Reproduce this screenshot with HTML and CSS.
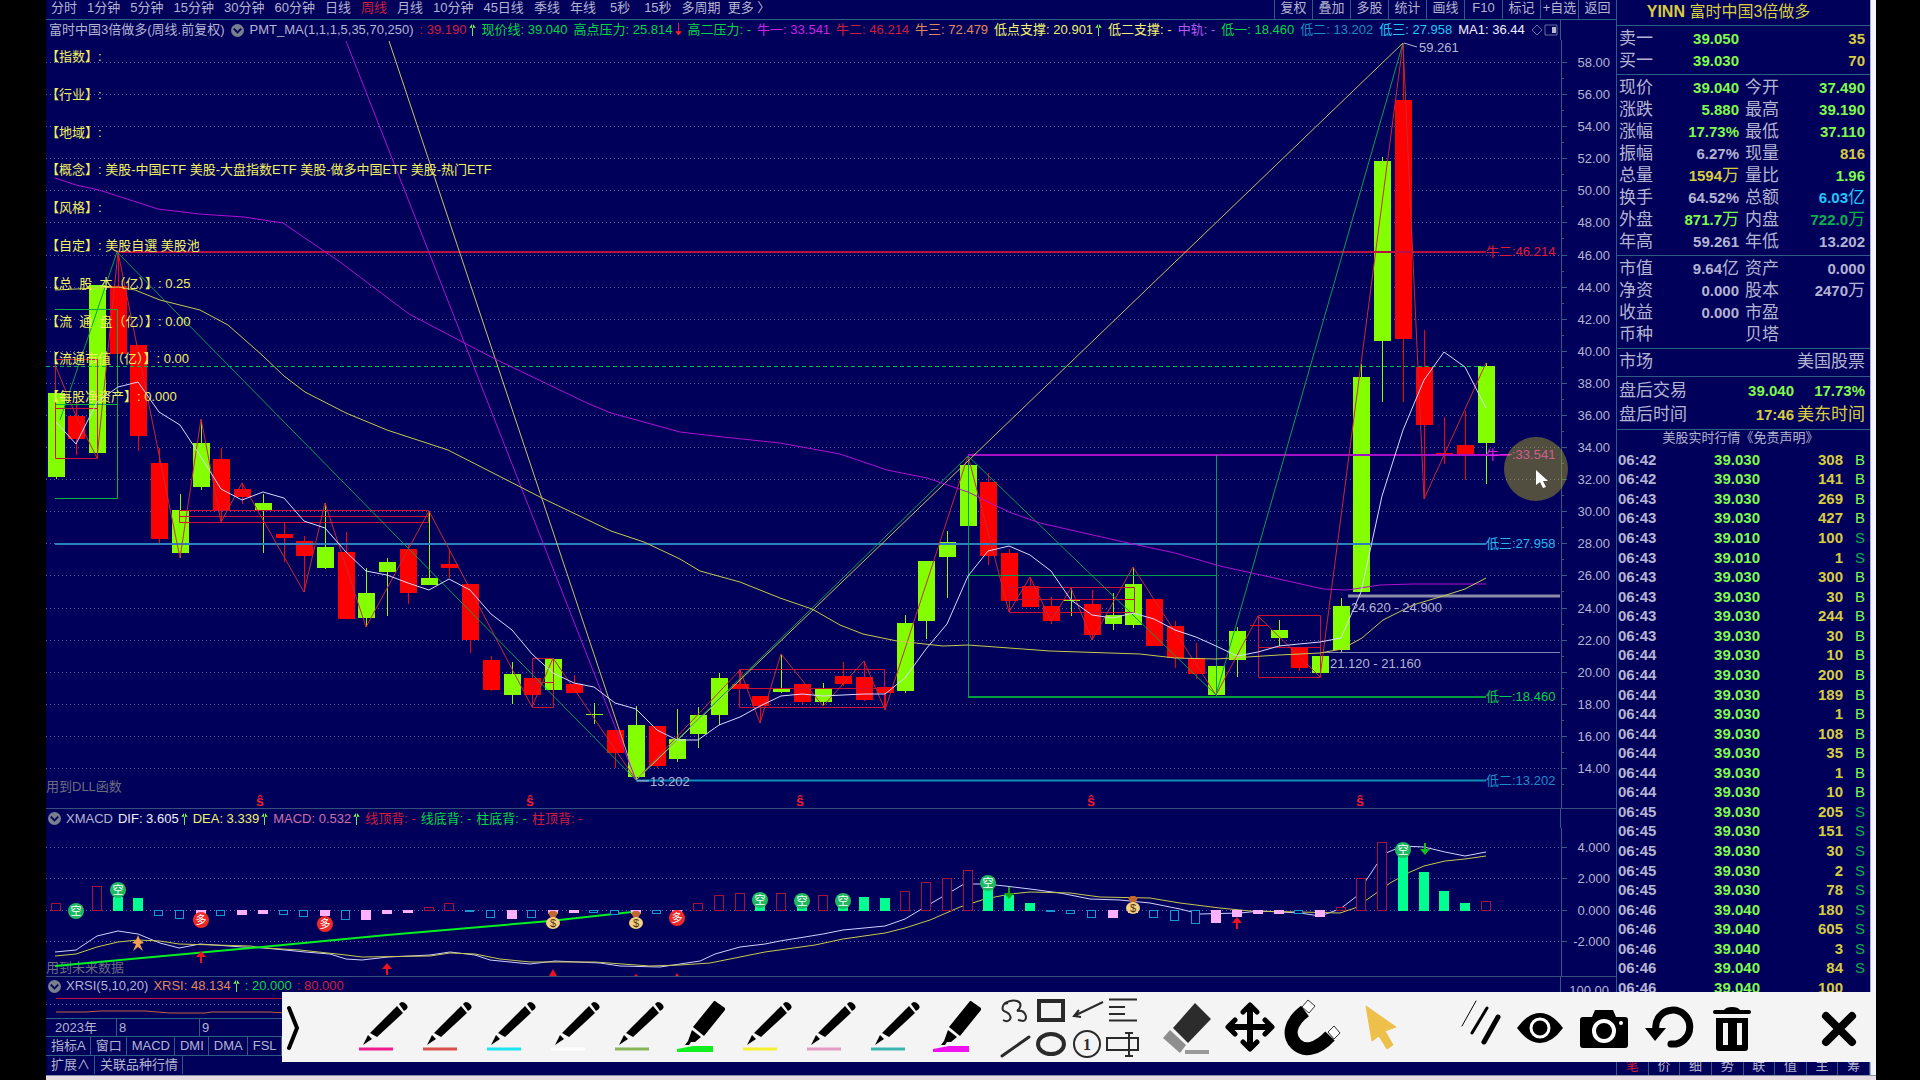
FILE: index.html
```html
<!DOCTYPE html>
<html lang="zh-CN">
<head>
<meta charset="utf-8">
<title>YINN 富时中国3倍做多</title>
<link rel="stylesheet" href="styles.css">
</head>
<body>
<svg class="sprite" aria-hidden="true">
  <symbol id="pen" viewBox="0 0 64 70">
    <path d="M17 41 44 14 50 21 24 45ZM15 43 19 47 10 53ZM46 12Q49 8 53 12T51 19Z"/>
    <path d="M6 57H40" fill="none" stroke="currentColor" stroke-width="3"/>
  </symbol>
  <symbol id="marker" viewBox="0 0 64 70">
    <path d="M42 9 52 16V18L31 44 20 35 41 9ZM19 38 28 45 22 50 18 50 16 53H12L15 49Z"/>
    <path d="M4 57 20 54H40V60H4Z" fill="currentColor"/>
  </symbol>
  <symbol id="up" viewBox="0 0 7 14"><path d="M3 1V14H4V1ZM0 5 3 1H4L7 5Z" fill="currentColor"/></symbol>
  <symbol id="down" viewBox="0 0 7 14"><path d="M3 0V13H4V0ZM0 9 3 13H4L7 9Z" fill="currentColor"/></symbol>
  <symbol id="fold" viewBox="0 0 14 14"><circle cx="7" cy="7" r="7" fill="#77808c"/><path d="M3 5 7 9 11 5" fill="none" stroke="#00005a" stroke-width="2"/></symbol>
</svg>

<main class="app">
  <section class="charts">
    <nav class="periods">
      <div class="tabs">
        <button>分时</button><button>1分钟</button><button>5分钟</button><button>15分钟</button><button>30分钟</button><button>60分钟</button><button>日线</button><button class="red">周线</button><button>月线</button><button>10分钟</button><button>45日线</button><button>季线</button><button>年线</button>
      </div>
      <div class="tabs tabs-wide"><button>5秒</button><button>15秒</button></div>
      <div class="tabs tabs-last"><button>多周期</button><button>更多 〉</button></div>
      <div class="tools">
        <button>复权</button><button>叠加</button><button>多股</button><button>统计</button><button>画线</button><button>F10</button><button>标记</button><button>+自选</button><button>返回</button>
      </div>
    </nav>

    <header class="legend">
      <div class="legend-items">
        <span>富时中国3倍做多(周线.前复权)</span>
        <svg class="fold"><use href="#fold"/></svg>
        <span>PMT_MA(1,1,1,5,35,70,250)</span>
        <span class="red">: 39.190<svg class="arrow lime"><use href="#up"/></svg></span>
        <span class="green">现价线: 39.040</span>
        <span class="green">高点压力: 25.814<svg class="arrow hot"><use href="#down"/></svg></span>
        <span class="green">高二压力: -</span>
        <span class="magenta">牛一: 33.541</span>
        <span class="red">牛二: 46.214</span>
        <span class="orange">牛三: 72.479</span>
        <span class="yellow">低点支撑: 20.901<svg class="arrow lime"><use href="#up"/></svg></span>
        <span class="yellow">低二支撑: -</span>
        <span class="violet">中轨: -</span>
        <span class="green">低一: 18.460</span>
        <span class="teal">低二: 13.202</span>
        <span class="cyan">低三: 27.958</span>
        <span class="white">MA1: 36.44</span>
        <svg class="side" viewBox="0 0 28 14"><path d="M1 7 6 2 11 7 6 12ZM14 2H26V12H14Z" fill="none" stroke="#6a6a9a"/><path d="M21 4H25V10H21Z" fill="#b8b8c8"/></svg>
      </div>
      <div class="axis-head"></div>
    </header>
    <svg id="price" class="plot" viewBox="46 40 1570 768" role="img" aria-label="周线"></svg>

    <header class="legend split">
      <div class="legend-items spaced">
        <svg class="fold"><use href="#fold"/></svg>
        <span>XMACD</span>
        <span class="white">DIF: 3.605<svg class="arrow lime"><use href="#up"/></svg></span>
        <span class="yellow">DEA: 3.339<svg class="arrow lime"><use href="#up"/></svg></span>
        <span class="pink">MACD: 0.532<svg class="arrow lime"><use href="#up"/></svg></span>
        <span class="red">线顶背: -</span><span class="green">线底背: -</span><span class="green">柱底背: -</span><span class="red">柱顶背: -</span>
      </div>
      <div class="axis-head"></div>
    </header>
    <svg id="macd" class="plot" viewBox="46 829 1570 148" role="img" aria-label="XMACD"></svg>

    <header class="legend split rsi">
      <div class="legend-items spaced">
        <svg class="fold"><use href="#fold"/></svg>
        <span>XRSI(5,10,20)</span>
        <span class="orange">XRSI: 48.134<svg class="arrow lime"><use href="#up"/></svg></span>
        <span class="green">: 20.000</span><span class="red">: 80.000</span>
      </div>
      <div class="axis-head low">100.00</div>
    </header>
    <svg id="rsi" class="plot" viewBox="46 996 1570 23" role="img" aria-label="XRSI">
      <path d="M56 999.500H1486" stroke="#c01040"/>
      <path d="M46 1005.500H1560" stroke="#6868a8" stroke-dasharray="1 3"/>
      <path d="M56 1013H86L100 1012H145L170 1014H205L212 1013H270L285 1014H500" fill="none" stroke="#c06040"/>
    </svg>
    <div class="dates"><span class="year">2023年</span><span class="month">8</span><span class="month">9</span></div>
    <nav class="strip"><button>指标A</button><button>窗口</button><button>MACD</button><button>DMI</button><button>DMA</button><button>FSL</button><button>TRIX</button></nav>
    <nav class="strip"><button>扩展∧</button><button>关联品种行情</button></nav>
  </section>

  <aside class="quote">
    <h1><b>YINN</b> 富时中国3倍做多</h1>
    <table class="block ask">
      <tr><th>卖一</th><td class="lime">39.050</td><td class="gold">35</td></tr>
      <tr><th>买一</th><td class="lime">39.030</td><td class="gold">70</td></tr>
    </table>
    <table class="block pairs">
      <tr><th>现价</th><td class="lime">39.040</td><th>今开</th><td class="lime">37.490</td></tr>
      <tr><th>涨跌</th><td class="lime">5.880</td><th>最高</th><td class="lime">39.190</td></tr>
      <tr><th>涨幅</th><td class="lime">17.73%</td><th>最低</th><td class="lime">37.110</td></tr>
      <tr><th>振幅</th><td>6.27%</td><th>现量</th><td class="gold">816</td></tr>
      <tr><th>总量</th><td class="gold">1594<i>万</i></td><th>量比</th><td class="lime">1.96</td></tr>
      <tr><th>换手</th><td>64.52%</td><th>总额</th><td class="cyan">6.03<i>亿</i></td></tr>
      <tr><th>外盘</th><td class="lime">871.7<i>万</i></td><th>内盘</th><td class="sell">722.0<i>万</i></td></tr>
      <tr><th>年高</th><td>59.261</td><th>年低</th><td>13.202</td></tr>
    </table>
    <table class="block pairs">
      <tr><th>市值</th><td>9.64<i>亿</i></td><th>资产</th><td>0.000</td></tr>
      <tr><th>净资</th><td>0.000</td><th>股本</th><td>2470<i>万</i></td></tr>
      <tr><th>收益</th><td>0.000</td><th>市盈</th><td></td></tr>
      <tr><th>币种</th><td></td><th>贝塔</th><td></td></tr>
    </table>
    <div class="block market"><span>市场</span><span>美国股票</span></div>
    <table class="block after">
      <tr><th>盘后交易</th><td class="lime">39.040</td><td class="lime">17.73%</td></tr>
      <tr><th>盘后时间</th><td class="gold">17:46</td><td class="gold"><i>美东时间</i></td></tr>
    </table>
    <p class="notice">美股实时行情《免责声明》</p>
    <table class="trades"><tbody id="trades"></tbody></table>
    <nav class="quote-tabs"><button class="red">笔</button><button>价</button><button>细</button><button>势</button><button>联</button><button>值</button><button>主</button><button>筹</button></nav>
  </aside>
  <div class="edge"></div>

  <div class="pens" role="toolbar" aria-label="画笔">
    <button class="open" aria-label="收起"><svg viewBox="0 0 71 70"><path d="M7 16 15 36 7 56" fill="none" stroke="#000" stroke-width="4" stroke-linecap="round"/></svg></button>
    <button class="c1" aria-label="画笔"><svg><use href="#pen"/></svg></button>
    <button class="c2" aria-label="画笔"><svg><use href="#pen"/></svg></button>
    <button class="c3" aria-label="画笔"><svg><use href="#pen"/></svg></button>
    <button class="c4" aria-label="画笔"><svg><use href="#pen"/></svg></button>
    <button class="c5" aria-label="画笔"><svg><use href="#pen"/></svg></button>
    <button class="c6" aria-label="荧光笔"><svg><use href="#marker"/></svg></button>
    <button class="c7" aria-label="画笔"><svg><use href="#pen"/></svg></button>
    <button class="c8" aria-label="画笔"><svg><use href="#pen"/></svg></button>
    <button class="c9" aria-label="画笔"><svg><use href="#pen"/></svg></button>
    <button class="c10" aria-label="荧光笔"><svg><use href="#marker"/></svg></button>
    <div class="shapes">
      <button aria-label="曲线"><svg viewBox="0 0 37 35"><path d="M8 28C13 31 18 27 14 22 11 19 6 20 8 14 10 9 18 8 22 9 28 11 25 17 22 19 32 17 33 29 28 29L23 28M13 11 9 12" stroke-width="2"/></svg></button>
      <button aria-label="矩形"><svg viewBox="0 0 37 35"><path d="M7 9H31V28H7Z" stroke-width="4"/></svg></button>
      <button aria-label="箭头"><svg viewBox="0 0 37 35"><path d="M34 10 5 24M10 18 5 24 12 25" stroke-width="2"/></svg></button>
      <button aria-label="多行"><svg viewBox="0 0 37 35"><path d="M3 7.500H31M3 15H19M3 22H19M3 28.500H31" stroke-width="2"/></svg></button>
      <button aria-label="直线"><svg viewBox="0 0 37 35"><path d="M7 29 34 10" stroke-width="3" stroke-linecap="round"/></svg></button>
      <button aria-label="椭圆"><svg viewBox="0 0 37 35"><ellipse cx="19" cy="17" rx="13" ry="10" stroke-width="4"/></svg></button>
      <button aria-label="序号"><svg viewBox="0 0 37 35"><circle cx="18" cy="17" r="13" stroke-width="2"/><text x="18" y="23" class="num">1</text></svg></button>
      <button aria-label="文本"><svg viewBox="0 0 37 35"><path d="M1 11H32V23H1ZM23 6V29M19 6H27M19 29H27" stroke-width="2"/></svg></button>
    </div>
    <button aria-label="橡皮"><svg viewBox="0 0 64 70"><path d="M40 11 56 27 33 51 18 36Z" fill="#2c2c2c"/><path d="M15 38 31 53 25 61 8 46Z" fill="#8e8e8e"/><path d="M30 60H54" stroke="#9a9a9a" stroke-width="4"/></svg></button>
    <button aria-label="移动"><svg viewBox="0 0 64 70"><path d="M31 14V56M10 35H52" stroke="#000" stroke-width="6"/><path d="M24 20 31 13 38 20M24 50 31 57 38 50M16 28 9 35 16 42M46 28 53 35 46 42" fill="none" stroke="#000" stroke-width="5" stroke-linecap="round" stroke-linejoin="round"/></svg></button>
    <button aria-label="吸附"><svg viewBox="0 0 64 70"><path d="M22 19C6 31 5 44 13 52 21 60 34 58 47 44" fill="none" stroke="#000" stroke-width="13"/><path d="M25 8 32 14 26 21 19 15ZM51 34 57 41 51 47 45 40Z" fill="#fff" stroke="#333"/></svg></button>
    <button aria-label="选择"><svg viewBox="0 0 64 70"><path d="M19 14 49 35 38 39 46 53 40 57 32 44 25 49Z" fill="#ecc04a" stroke="#ecc04a" stroke-linejoin="round"/></svg></button>
    <button class="apart" aria-label="粗细"><svg viewBox="0 0 64 70"><g stroke="#000" stroke-linecap="round"><path d="M32 9 18 34"/><path d="M43 16 28 41" stroke-width="3"/><path d="M54 25 40 50" stroke-width="5"/></g></svg></button>
    <button aria-label="显示"><svg viewBox="0 0 64 70"><path d="M9 36Q20 21 32 21T55 36Q44 51 32 51T9 36Z"/><circle cx="32" cy="36" r="9" stroke="#fff" stroke-width="3"/></svg></button>
    <button aria-label="截图"><svg viewBox="0 0 64 70"><path d="M11 25H20L23 18H41L44 25H53Q56 25 56 28V53Q56 56 53 56H11Q8 56 8 53V28Q8 25 11 25Z"/><circle cx="32" cy="39" r="10" stroke="#fff" stroke-width="4"/><circle cx="49" cy="31" r="2" fill="#fff"/></svg></button>
    <button aria-label="撤销"><svg viewBox="0 0 64 70"><path d="M20 38A17 17 0 1 1 35 52" fill="none" stroke="#000" stroke-width="7" stroke-linecap="round"/><path d="M9 36H30L19 49Z"/></svg></button>
    <button aria-label="清空"><svg viewBox="0 0 64 70"><path d="M15 18H24Q26 15 32 15T40 18H49Q51 18 51 20T49 22H15Q13 22 13 20T15 18ZM16 26H48V56Q48 59 45 59H19Q16 59 16 56ZM23 31V53H28V31ZM37 31V53H42V31Z" fill-rule="evenodd"/></svg></button>
    <button class="apart" aria-label="关闭"><svg viewBox="0 0 64 70"><path d="M19 24 45 50M45 24 19 50" stroke="#000" stroke-width="8" stroke-linecap="round"/></svg></button>
  </div>
</main>
<div class="taskbar"></div>
<script src="script.js"></script>
</body>
</html>
```
FILE: styles.css
```css
* { box-sizing: border-box; }

body {
  margin: 0;
  padding: 0 44px 0 46px;
  min-height: 100vh;
  display: flex;
  flex-direction: column;
  background: #000;
  color: #b4b4d2;
  font: 13px/18px "Liberation Sans", "Noto Sans CJK SC", sans-serif;
  overflow: hidden;
}

button {
  margin: 0;
  padding: 0;
  border: 0;
  background: none;
  color: inherit;
  font: inherit;
  white-space: nowrap;
}

.sprite { position: absolute; width: 0; height: 0; }

.app {
  position: relative;
  flex: 1;
  display: grid;
  grid-template-columns: minmax(0, 1fr) 254px 6px;
  background: #00005a;
}

.charts { display: flex; flex-direction: column; min-width: 0; }

/* colours */
.red { color: #d01c3c; }
.hot { color: #ff2020; }
.green { color: #00d848; }
.lime { color: #7dfc4a; }
.sell { color: #0cb04c; }
.magenta { color: #cc22e0; }
.violet { color: #b05cf0; }
.orange { color: #e0885c; }
.yellow { color: #f0f070; }
.gold { color: #d8cc40; }
.teal { color: #1c8cc0; }
.cyan { color: #20c8f8; }
.white { color: #f0f0ff; }
.pink { color: #cc70a8; }

/* period bar */
.periods {
  display: flex;
  gap: 10px;
  height: 20px;
  padding-left: 5px;
  border-bottom: 1px solid #2e5c84;
}
.tabs { display: flex; gap: 10px; line-height: 15px; }
.tabs-wide { gap: 14px; padding-left: 4px; }
.tabs-last { gap: 7px; }
.tabs button { height: 15px; }
.tools { display: flex; margin-left: auto; line-height: 15px; }
.tools button { width: 38px; height: 19px; padding-bottom: 4px; border-left: 1px solid #2e5c84; }

/* indicator headers */
.legend { display: flex; height: 20px; }
.legend.split { border-top: 1px solid #36507e; }
.legend-items {
  flex: 1;
  min-width: 0;
  display: flex;
  align-items: center;
  gap: 6px;
  padding: 0 0 0 3px;
  overflow: hidden;
  white-space: nowrap;
  border-right: 1px solid #2e5c84;
}
.legend-items.spaced { gap: 5px; padding-left: 2px; }
.axis-head { flex: 0 0 55px; padding-right: 7px; text-align: right; line-height: 20px; }
.axis-head.low { line-height: 28px; }
.rsi { height: 19px; }
.fold { flex: none; width: 13px; height: 13px; }
.arrow { width: 7px; height: 13px; margin-left: 2px; vertical-align: -2px; }
.side { flex: none; width: 28px; height: 14px; }

.plot { display: block; width: 100%; height: auto; overflow: visible; }
.plot text { font-size: 13px; fill: currentColor; }
.plot .end { text-anchor: end; }
.plot .badge { font-size: 11px; fill: #fff; text-anchor: middle; }
.plot .signal { font-size: 14px; font-weight: bold; fill: #f01c30; text-anchor: middle; }
.plot .faint { fill: #6c6c80; }

.dates { display: flex; height: 18px; border-top: 1px solid #2e5c84; }
.year { width: 70px; padding-left: 9px; }
.month { width: 83px; padding-left: 2px; border-left: 1px solid #2e5c84; }

.strip { display: flex; height: 19px; border-top: 1px solid #2e5c84; }
.strip button { padding: 0 4px 0 5px; border-right: 1px solid #2e5c84; }

/* quote panel */
.quote {
  display: flex;
  flex-direction: column;
  border-left: 1px solid #2e5c84;
}
.quote h1 {
  margin: 0;
  height: 25px;
  padding-right: 30px;
  color: #d8cc40;
  font-size: 16px;
  font-weight: normal;
  line-height: 23px;
  text-align: center;
}
.block {
  border-top: 1px solid #2e5c84;
  padding: 2px 5px 2px 2px;
  font-size: 17px;
  line-height: 22px;
}
table { width: 100%; border-spacing: 0; table-layout: fixed; }
th { padding: 0; font-weight: normal; text-align: left; white-space: nowrap; }
td { padding: 0; font-size: 15px; font-weight: bold; text-align: right; white-space: nowrap; }
td i { font-style: normal; font-weight: normal; font-size: 17px; }
tr { height: 22px; }
.ask th, .pairs th { width: 50px; }
.ask td:nth-child(2), .pairs td:nth-child(2) { width: 70px; }
.pairs th:nth-child(3) { padding-left: 6px; width: 56px; }
.market { display: flex; justify-content: space-between; height: 28px; }
.after tr { height: 24px; }
.after td:nth-child(3) { width: 71px; }
.notice { margin: 0; height: 21px; border-top: 1px solid #2e5c84; padding-right: 6px; text-align: center; line-height: 16px; }

.trades { height: 548px; }
.trades tr { height: auto; }
.trades td { line-height: 18px; }
.trades td:first-child { text-align: left; width: 76px; padding-left: 1px; }
.trades td:nth-child(2) { width: 67px; }
.trades td:nth-child(4) { width: 27px; padding-right: 5px; font-weight: normal; }

.quote-tabs { display: flex; margin-top: auto; height: 19px; }
.quote-tabs button { flex: 1; border-right: 1px solid #2e5c84; }

.edge { background: #f4f5fb; border-left: 1px solid #b0b4d0; }

.taskbar { height: 5px; background: #e8dce2; border-top: 1px solid #8494a8; }

/* floating drawing toolbar */
.pens {
  position: absolute;
  left: 236px;
  right: 0;
  bottom: 13px;
  height: 70px;
  display: flex;
  background: #f4f4f4;
}
.pens > button { flex: 0 0 64px; }
.pens svg { display: block; width: 64px; height: 70px; }
.pens .open { flex-basis: 71px; }
.pens .open svg { width: 71px; }
.pens .apart { margin-left: 33px; }
.pens .apart:last-child { margin-left: 43px; }
.shapes { display: grid; grid-template-columns: repeat(4, 37px); grid-template-rows: 35px 35px; margin: 0 12px 0 2px; }
.shapes svg { width: 37px; height: 35px; fill: none; stroke: #2a2a2a; }
.shapes .num { font: bold 16px "Liberation Serif", serif; fill: #2a2a2a; stroke: none; text-anchor: middle; }
.c1 { color: #f01c90; }
.c2 { color: #d8504c; }
.c3 { color: #1ce4f0; }
.c4 { color: #fff; }
.c5 { color: #88b458; }
.c6 { color: #10f020; }
.c7 { color: #f4f030; }
.c8 { color: #e49cc4; }
.c9 { color: #3cb4b0; }
.c10 { color: #f010f0; }
```
FILE: script.js
```js
const GREEN = '#84ff00', RED = '#ff0000';
const x = i => Math.round(55.5 + 20.73 * i);
const at = pts => pts.map(([i, y]) => [x(i), y]);
const line = (pts, color, w = 1) => `<polyline points="${pts.join(' ')}" fill="none" stroke="${color}" stroke-width="${w}"/>`;
const path = (d, color, extra = '') => `<path d="${d}" fill="none" stroke="${color}" ${extra}/>`;
const text = (tx, ty, s, color, cls = '') => `<text x="${tx}" y="${ty}" class="${cls}" ${color ? `style="fill:${color}"` : ''}>${s}</text>`;

/* direction, body top, body bottom, high, low */
const candles = [
  [1,393,477,393,479],[0,416,439,400,455],[1,285,453,285,458],[0,286,354,252,354],[0,345,436,345,451],
  [0,463,539,448,544],[1,510,553,494,558],[1,443,487,420,490],[0,459,510,448,522],[0,489,497,483,504],
  [1,503,510,494,553],[0,534,538,523,562],[0,541,556,536,592],[1,547,568,503,569],[0,552,619,532,619],
  [1,593,618,568,627],[1,562,572,558,616],[0,549,593,545,604],[1,578,585,511,585],[0,564,568,550,578],
  [0,584,640,584,653],[0,660,690,656,691],[1,674,695,662,704],[0,678,695,678,707],[1,659,690,658,690],
  [0,684,693,675,693],[1,714,715,703,724],[0,730,753,730,768],[1,725,777,706,780],[0,726,766,726,768],
  [1,739,759,709,762],[1,715,734,707,748],[1,678,715,673,725],[0,684,689,670,689],[0,696,706,696,723],
  [1,689,692,654,693],[0,684,702,684,704],[1,689,702,683,706],[0,676,684,662,686],[0,677,700,661,701],
  [0,687,693,687,710],[1,623,691,615,693],[1,561,621,561,639],[1,542,557,531,598],[1,465,526,456,526],
  [0,482,556,473,565],[0,553,601,549,612],[0,586,607,577,607],[0,606,621,597,624],[1,600,601,588,616],
  [0,604,635,590,640],[1,615,624,593,630],[1,584,625,567,628],[0,599,646,599,646],[0,626,658,621,668],
  [0,658,674,643,679],[1,666,695,666,695],[1,631,660,627,677],[0,625,626,616,626],[1,630,638,620,646],
  [0,647,668,647,671],[1,656,673,656,673],[1,606,650,598,653],[1,377,592,364,592],[1,161,341,157,402],
  [0,100,339,43,402],[0,367,425,330,499],[0,453,454,417,464],[0,445,456,411,480],[1,366,443,363,484]
];

const ma5 = [422,444,402,387,382,412,425,457,489,500,492,498,521,528,552,571,575,583,590,579,590,614,630,654,673,
  683,687,703,709,730,740,740,725,717,706,696,694,696,695,694,694,678,649,624,576,551,546,555,571,600,615,618,613,
  619,630,637,646,656,652,646,644,642,638,592,496,430,380,352,367,408];
const ma35 = [[55,290],[97,288],[118,287],[135,290],[160,300],[200,310],[228,325],[262,355],[284,376],[305,392],[346,413],[387,430],
  [448,450],[493,473],[542,498],[611,531],[644,542],[680,559],[700,571],[740,582],[780,598],[812,609],[840,625],[863,634],[897,641],
  [943,646],[968,645],[1050,651],[1140,654],[1175,658],[1216,659],[1279,655],[1320,653],[1342,649],[1362,638],[1383,620],[1413,605],
  [1443,596],[1465,589],[1486,578]];
const ma70 = [[55,178],[76,185],[99,190],[158,209],[199,214],[244,217],[283,223],[340,262],[409,314],[495,359],[587,403],[611,413],
  [680,432],[723,437],[780,443],[840,454],[887,470],[927,478],[968,492],[1009,512],[1040,523],[1097,536],[1133,544],[1175,553],
  [1220,566],[1279,579],[1323,589],[1347,590],[1380,585],[1413,584],[1486,584]];
const swings = at([[0,367],[1,416],[2,458],[3,252],[6,558],[7,419],[8,522],[9,483],[12,592],[13,503],[15,627],[18,511],[23,707],
  [24,658],[28,780],[33,670],[34,723],[35,654],[37,706],[39,661],[40,710],[44,456],[46,612],[47,577],[48,621],[49,588],[50,640],
  [52,567],[56,695],[58,616],[61,677],[65,43],[66,499],[69,363]]);

/* left, right, top, bottom, middle */
const boxes = [[55,97,359,458,408],[179,428,510,522,516],[532,553,658,707,682],[739,884,669,707,688],[1009,1134,587,612,599],[1258,1320,615,677,647]];

function axis(ticks, top, bottom) {
  let s = '';
  for (const [y, label] of ticks) {
    s += path(`M46 ${y}.5H1560`, '#5c5c9c', 'stroke-dasharray="1 3"') + path(`M1561 ${y}.5H1567`, '#2e5c84');
    s += text(1610, y + 5, label, '', 'end');
  }
  return s + path(`M1561.5 ${top}V${bottom}`, '#2e5c84');
}

function drawPrice() {
  const ticks = [];
  for (let p = 58; p >= 14; p -= 2) ticks.push([Math.round(768 - (p - 14) * 16.045), p.toFixed(2)]);
  let s = axis(ticks, 40, 808);
  for (const [y] of ticks) s += path(`M1561 ${y + 16}.5H1564`, '#2e5c84');

  const notes = ['【指数】:','【行业】:','【地域】:','【概念】: 美股-中国ETF 美股-大盘指数ETF 美股-做多中国ETF 美股-热门ETF','【风格】:','【自定】: 美股自選 美股池',
    '【总  股  本（亿）】: 0.25','【流  通  盘（亿）】: 0.00','【流通市值（亿）】: 0.00','【每股净资产】: 0.000'];

  s += candles.map(([up, t, b, h, l], i) => {
    const c = up ? GREEN : RED;
    return `<path d="M${x(i)}.5 ${h}V${l}" stroke="${c}"/><rect x="${Math.max(46, x(i) - 8)}" y="${t}" width="17" height="${b - t}" fill="${c}"/>`;
  }).join('');

  s += path('M46 366.500H1486', '#00c040', 'stroke-dasharray="4 3"');
  s += path('M117 252H1486', '#b81040', 'stroke-width="2"');
  s += path('M968 455H1510', '#a810c8', 'stroke-width="2"');
  s += path('M55 544H1486', '#2c80c0', 'stroke-width="2"');
  s += path('M968 697H1486', '#00a040', 'stroke-width="2"');
  s += path('M636 780.500H1486', '#0c90b8', 'stroke-width="2"');
  s += path('M1348 596H1560', '#8c8ca8', 'stroke-width="3"');
  s += path('M1323 652.500H1560', '#8484b4');
  s += path('M55 309.500H117.500V498.500H55M55 404.500H117', '#00b440');
  s += path('M968.500 456V697M1216.500 455V697M968 575.500H1216', '#00a048');
  s += boxes.map(([l, r, t, b, m]) => path(`M${l}.5 ${t}.5H${r}.5V${b}.5H${l}.5ZM${l} ${m}.5H${r}`, '#d01030')).join('');

  s += line(swings, '#c82838');
  s += line([[60,420],[117,252],[636,780],[968,456],[1216,695],[1403,43]], '#00a050');
  s += line([[389,41],[636,780],[1403,43]], '#c8c060');
  s += line([[346,41],[636,780]], '#b010d0');
  s += line(ma70, '#b010d0') + line(ma35, '#c8c84c') + line(ma5.map((y, i) => [x(i), y]), '#d8d8ff');

  s += notes.map((n, i) => `<text x="46" y="${Math.round(61 + i * 37.8)}" xml:space="preserve" style="fill:#f0f060">${n}</text>`).join('');
  s += text(46, 791, '用到DLL函数', '', 'faint');
  s += path('M1404 43 1417 47M637 781H649', '#b4b4d2');
  s += text(1419, 52, '59.261') + text(650, 786, '13.202') + text(1351, 612, '24.620 - 24.900') + text(1330, 668, '21.120 - 21.160');
  s += text(1486, 256, '牛二:46.214', '#e01c34') + text(1486, 459, '牛一:33.541', '#e020e8') + text(1486, 548, '低三:27.958', '#20b8f0');
  s += text(1486, 701, '低一:18.460', '#00d048') + text(1486, 785, '低二:13.202', '#1890c8');
  s += [260,530,800,1091,1360].map(sx => text(sx, 806, 'ŝ', '', 'signal')).join('');

  s += '<circle cx="1536" cy="469" r="32" fill="rgba(180,172,33,.45)"/>';
  s += '<path d="M1536 470V485L1540 482 1543 488 1546 487 1543 481H1548Z" fill="#fff"/>';
  document.getElementById('price').innerHTML = s;
}

/* h: hollow red above zero, g: solid green above, c: hollow cyan below, p: solid pink below */
const bars = 'h904 g908 h887 g898 g899 c917 c920 p914 c917 p915 p914 c916 c918 p916 c921 p920 p914 p913 h908 h904 c912 c919 p919 c919 p914 p913 c914 c916 p914 c915 p914 h904 h896 h894 g907 h894 g907 h896 g907 g898 g899 h892 h883 h879 h871 g890 g896 g904 c913 c915 c919 p918 p913 c919 c922 c925 p923 p917 p914 p914 c915 p917 h908 h879 h843 g856 g873 g892 g904 h902'.split(' ');
const dif = [[55,953],[76,951],[97,937],[118,932],[138,935],[160,944],[179,949],[200,945],[243,948],[265,949],[305,953],[330,955],[346,960],
  [362,961],[388,958],[430,956],[450,953],[475,956],[490,961],[530,965],[555,962],[600,964],[620,967],[660,968],[680,965],[700,962],[715,955],
  [740,948],[765,945],[780,942],[823,935],[843,931],[885,927],[905,920],[930,905],[947,895],[964,885],[985,885],[1005,887],[1030,890],[1060,894],
  [1090,900],[1120,901],[1150,904],[1180,910],[1200,915],[1240,914],[1260,912],[1300,914],[1320,917],[1340,910],[1357,897],[1365,883],
  [1377,865],[1386,854],[1403,847],[1424,848],[1445,853],[1465,857],[1486,853]];
const dea = [[55,957],[76,955],[97,948],[118,943],[138,941],[160,942],[179,945],[250,947],[265,949],[300,951],[346,956],[362,958],[430,957],
  [450,954],[475,955],[500,960],[530,963],[595,963],[650,967],[680,966],[710,964],[740,958],[765,953],[815,946],[843,940],[885,934],[905,929],
  [930,921],[960,908],[985,900],[1010,895],[1030,893],[1070,894],[1100,898],[1150,899],[1180,904],[1220,909],[1250,912],[1300,913],[1340,914],
  [1355,909],[1375,895],[1390,884],[1410,873],[1424,867],[1445,862],[1465,860],[1486,857]];

const ball = (i, y, s, color) => `<circle cx="${x(i)}" cy="${y}" r="8" fill="${color}"/>` + text(x(i), y + 4, s, '', 'badge');
const bag = (i, y) => `<path d="M${x(i) - 5} ${y - 8}L${x(i) - 2} ${y - 10}H${x(i) + 2}L${x(i) + 5} ${y - 8}L${x(i) + 2} ${y - 3}H${x(i) - 2}Z" fill="#c06830"/><ellipse cx="${x(i)}" cy="${y + 2}" rx="7" ry="6" fill="#f4d080"/>` + text(x(i), y + 6, '$', '#503010', 'badge');
const arrow = (ax, y, dir, color) => `<path d="M${ax - 5} ${y}L${ax} ${y - 6 * dir}L${ax + 5} ${y}H${ax + 1}V${y + 6 * dir}H${ax - 1}V${y}Z" fill="${color}"/>`;

function drawMacd() {
  let s = axis([[848,'4.000'],[879,'2.000'],[911,'0.000'],[942,'-2.000']], 829, 977);
  s += text(46, 973, '用到未来数据', '', 'faint');
  s += line(dif, '#d0d0ff') + line(dea, '#c8c84c');
  s += line([[55,967],[262,948],[387,936],[550,922],[632,913]], '#00f020', 2);
  s += bars.map((b, i) => {
    const y = +b.slice(1), l = x(i) - 5;
    if (b[0] === 'h') return `<rect x="${l + .5}" y="${y + .5}" width="9" height="${911 - y}" fill="#00005a" stroke="#a81040"/>`;
    if (b[0] === 'g') return `<rect x="${l}" y="${y}" width="10" height="${912 - y}" fill="#00ff90"/>`;
    if (b[0] === 'c') return `<rect x="${l + .5}" y="911.500" width="8" height="${Math.max(1, y - 912)}" fill="#00005a" stroke="#1898d0"/>`;
    return `<rect x="${l}" y="911" width="10" height="${y - 910}" fill="#ffb0ff"/>`;
  }).join('');
  s += [[1,912],[3,891],[34,901],[36,902],[38,902],[45,884],[65,851]].map(([i, y]) => ball(i, y, '空', '#20b860')).join('');
  s += [[7,921],[13,925],[30,919]].map(([i, y]) => ball(i, y, '多', '#f02828')).join('');
  s += [[24,922],[28,922],[52,907]].map(([i, y]) => bag(i, y)).join('');
  s += arrow(201, 958, 1, '#f01020') + arrow(387, 970, 1, '#f01020') + arrow(1237, 924, 1, '#f01020');
  s += arrow(1009, 894, -1, '#10a810') + arrow(1425, 850, -1, '#10c020');
  s += '<path d="M553 970 557 977H549ZM636 975 638 977H634ZM677 974 679 977H675Z" fill="#f01020"/>';
  s += '<path d="M138 936 140 941 144 944 140 945 143 952 138 948 133 952 136 945 132 944 136 941Z" fill="#f0a050"/>';
  document.getElementById('macd').innerHTML = s;
}

const trades = `06:42 39.030 308 B
06:42 39.030 141 B
06:43 39.030 269 B
06:43 39.030 427 B
06:43 39.010 100 S
06:43 39.010 1 S
06:43 39.030 300 B
06:43 39.030 30 B
06:43 39.030 244 B
06:43 39.030 30 B
06:44 39.030 10 B
06:44 39.030 200 B
06:44 39.030 189 B
06:44 39.030 1 B
06:44 39.030 108 B
06:44 39.030 35 B
06:44 39.030 1 B
06:44 39.030 10 B
06:45 39.030 205 S
06:45 39.030 151 S
06:45 39.030 30 S
06:45 39.030 2 S
06:45 39.030 78 S
06:46 39.040 180 S
06:46 39.040 605 S
06:46 39.040 3 S
06:46 39.040 84 S
06:46 39.040 100 `;

document.getElementById('trades').innerHTML = trades.split('\n').map(r => {
  const [t, p, v, side] = r.split(' ');
  return `<tr><td>${t}</td><td class="lime">${p}</td><td class="gold">${v}</td><td class="${side === 'B' ? 'lime' : 'sell'}">${side}</td></tr>`;
}).join('');

drawPrice();
drawMacd();
```
